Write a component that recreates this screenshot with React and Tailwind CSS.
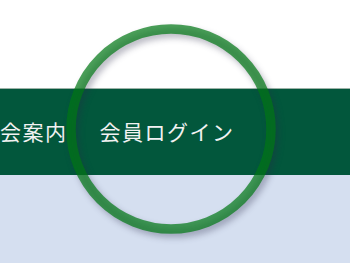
export default function App() {
  return (
    <div className="relative w-[350px] h-[263px] overflow-hidden bg-white" style={{ fontFamily: '"Noto Sans CJK JP", "Noto Sans", sans-serif' }}>
      <div className="h-[88px] bg-white" />
      <div className="h-[87px] bg-[#02573c] border-t border-[#9db3a8] flex items-center">
        <div className="flex items-center text-[21px] tracking-[1.5px] text-[#f2f2f2] gap-[32px]">
          <span>会案内</span>
          <span>会員ログイン</span>
        </div>
      </div>
      <div className="h-[88px] bg-[#d5dff0]" />
      <svg
        className="absolute left-0 top-0 pointer-events-none"
        width="350"
        height="263"
        style={{ filter: 'drop-shadow(3px 4px 3px rgba(40,40,70,0.45))' }}
      >
        <circle cx="171" cy="129" r="100" fill="none" stroke="rgba(0,120,20,0.7)" strokeWidth="9.5" />
      </svg>
    </div>
  );
}
